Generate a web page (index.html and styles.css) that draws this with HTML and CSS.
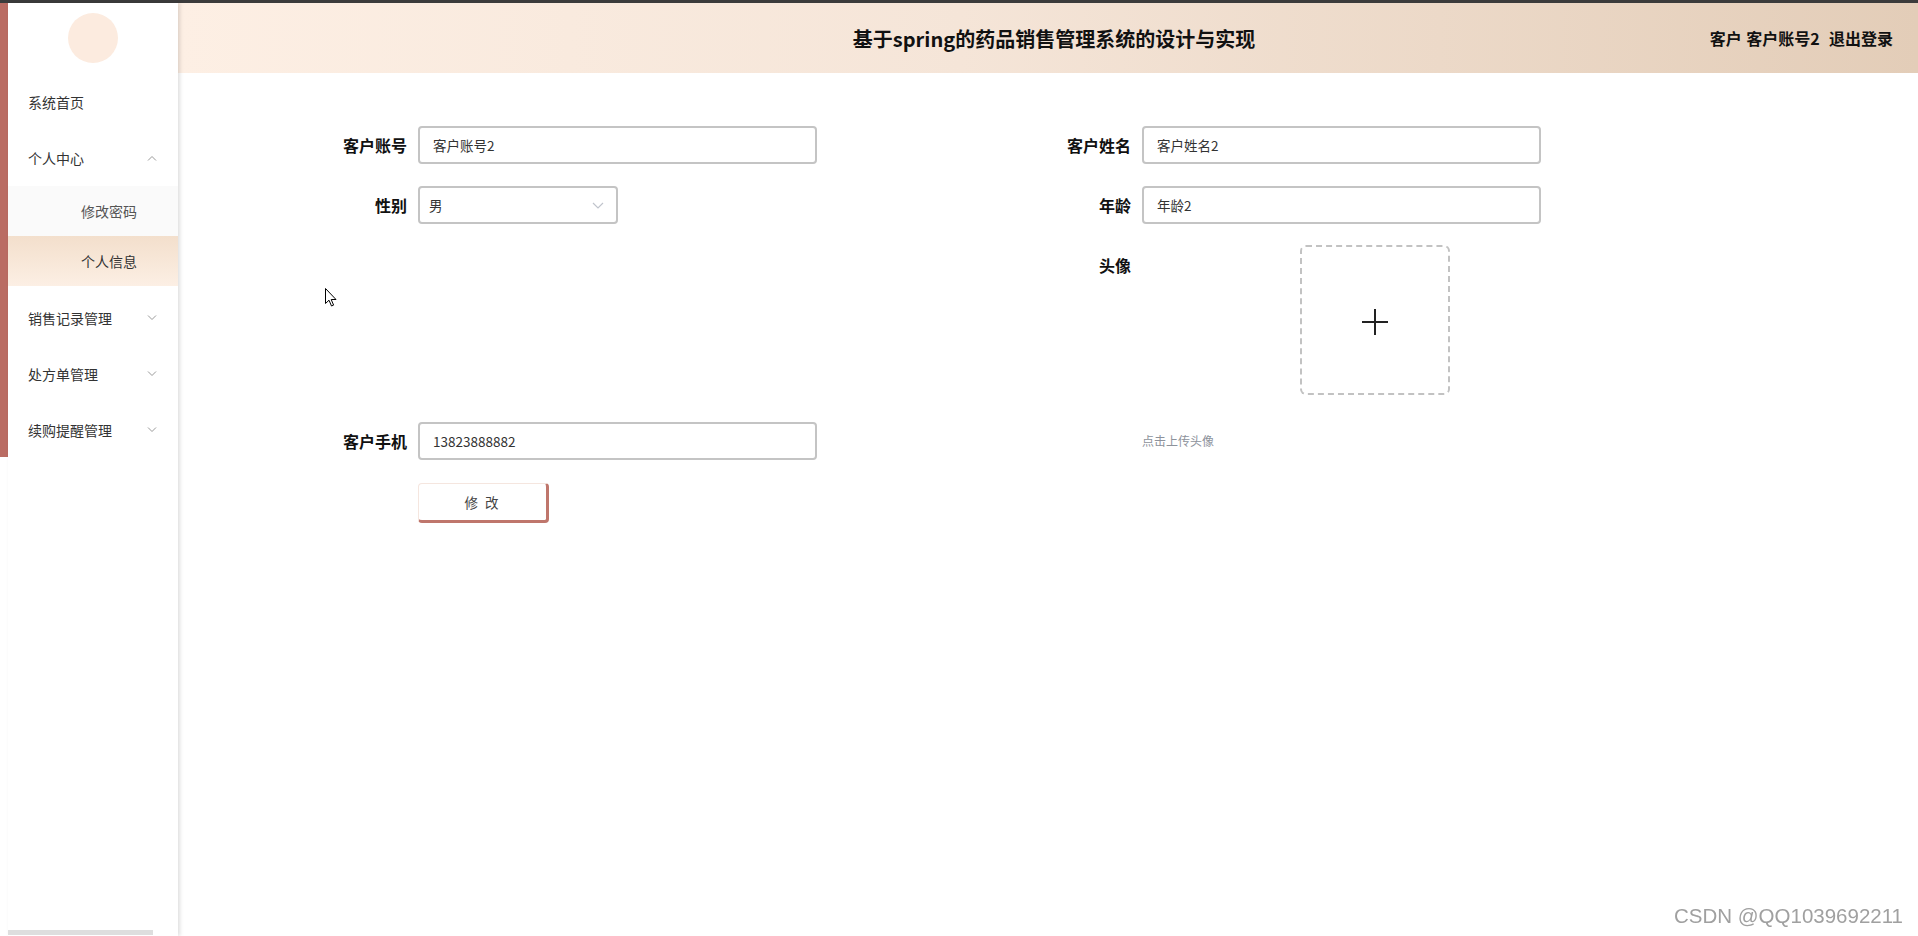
FILE: index.html
```html
<!DOCTYPE html>
<html lang="zh-CN">
<head>
<meta charset="utf-8">
<title>个人信息</title>
<link rel="stylesheet" href="styles.css">
</head>
<body>
<div class="topbar"></div>
<div class="layout">
  <aside class="sidebar">
    <div class="strip"></div>
    <nav class="panel">
      <div class="avatar"></div>
      <ul class="menu">
        <li class="item">系统首页</li>
        <li class="item">个人中心
          <svg class="chev" viewBox="0 0 10 6" width="10" height="6"><path d="M1 5.5 L5 1.5 L9 5.5" fill="none" stroke="#999" stroke-width="1"/></svg>
        </li>
        <li class="sub">
          <div class="sub-item">修改密码</div>
          <div class="sub-item active">个人信息</div>
        </li>
        <li class="item">销售记录管理
          <svg class="chev" viewBox="0 0 10 6" width="10" height="6"><path d="M1 0.5 L5 4.5 L9 0.5" fill="none" stroke="#999" stroke-width="1"/></svg>
        </li>
        <li class="item">处方单管理
          <svg class="chev" viewBox="0 0 10 6" width="10" height="6"><path d="M1 0.5 L5 4.5 L9 0.5" fill="none" stroke="#999" stroke-width="1"/></svg>
        </li>
        <li class="item">续购提醒管理
          <svg class="chev" viewBox="0 0 10 6" width="10" height="6"><path d="M1 0.5 L5 4.5 L9 0.5" fill="none" stroke="#999" stroke-width="1"/></svg>
        </li>
      </ul>
      <div class="scrollbar"></div>
    </nav>
  </aside>
  <main class="main">
    <header class="header">
      <div></div>
      <h1 class="title">基于spring的药品销售管理系统的设计与实现</h1>
      <div class="user">客户 客户账号2&nbsp;&nbsp;退出登录</div>
    </header>
    <form class="form">
      <div class="field">
        <label class="label">客户账号</label>
        <input class="input" type="text" value="客户账号2">
      </div>
      <div class="field">
        <label class="label">客户姓名</label>
        <input class="input" type="text" value="客户姓名2">
      </div>
      <div class="field">
        <label class="label">性别</label>
        <div class="select">
          <span>男</span>
          <svg viewBox="0 0 12 7" width="12" height="7"><path d="M1 1 L6 6 L11 1" fill="none" stroke="#c0c4cc" stroke-width="1.2"/></svg>
        </div>
      </div>
      <div class="field">
        <label class="label">年龄</label>
        <input class="input" type="text" value="年龄2">
      </div>
      <div class="field"></div>
      <div class="field upload-field">
        <label class="label">头像</label>
        <div class="upload">
          <svg viewBox="0 0 28 28" width="28" height="28"><path d="M14 1 V27 M1 14 H27" stroke="#222" stroke-width="2"/></svg>
        </div>
      </div>
      <div class="field">
        <label class="label">客户手机</label>
        <input class="input" type="text" value="13823888882">
      </div>
      <div class="field">
        <div class="hint">点击上传头像</div>
      </div>
      <div class="field">
        <button class="btn" type="button">修 改</button>
      </div>
    </form>
    <svg class="cursor" viewBox="0 0 12 19" width="12" height="19"><path d="M0.5 0.5 L0.5 15.5 L4 12.2 L6.5 18 L8.6 17.1 L6.2 11.5 L11 11.5 Z" fill="#fff" stroke="#000" stroke-width="1"/></svg>
  </main>
</div>
<div class="watermark">CSDN @QQ1039692211</div>
</body>
</html>
```
FILE: styles.css
```css
* { box-sizing: border-box; }
html, body {
  margin: 0;
  padding: 0;
  height: 100%;
  overflow: hidden;
  background: #fff;
  font-family: "Noto Sans CJK SC", "Liberation Sans", sans-serif;
  color: #333;
}
.topbar {
  height: 3px;
  background: #3b3b3b;
}
.layout {
  display: flex;
  height: calc(100vh - 3px);
}
.sidebar {
  display: flex;
  align-items: flex-start;
  width: 178px;
  flex: 0 0 178px;
  height: 100%;
  position: relative;
  z-index: 2;
}
.strip {
  width: 8px;
  height: 454px;
  background: #ba6c63;
}
.panel {
  width: 170px;
  height: 100%;
  background: #fff;
  box-shadow: 2px 0 4px rgba(0, 0, 0, 0.13);
  display: flex;
  flex-direction: column;
}
.avatar {
  width: 50px;
  height: 50px;
  border-radius: 50%;
  background: #fcebdf;
  margin: 10px auto 11px;
}
.menu {
  list-style: none;
  margin: 0;
  padding: 0;
}
.item {
  height: 56px;
  display: flex;
  align-items: center;
  justify-content: space-between;
  padding: 0 21px 0 20px;
  font-size: 14px;
  color: #333;
}
.chev { display: block; }
.sub {
  padding-bottom: 4px;
}
.sub-item {
  height: 50px;
  display: flex;
  align-items: center;
  padding-left: 73px;
  font-size: 14px;
  color: #555;
  background: #fafafa;
}
.sub-item.active {
  background: linear-gradient(180deg, #f3dfcc, #fcefe4);
  color: #333;
}
.scrollbar {
  margin-top: auto;
  margin-bottom: 1px;
  height: 5px;
  width: 145px;
  background: #dedede;
}
.main {
  flex: 1;
  position: relative;
}
.header {
  height: 70px;
  display: grid;
  grid-template-columns: 1fr auto 1fr;
  align-items: center;
  padding: 0 25px 0 37px;
  background: linear-gradient(90deg, #fdefe4 0%, #f5e5d8 45%, #e3cdb8 100%);
}
.title {
  margin: 0;
  font-size: 20px;
  font-weight: 700;
  color: #111;
  white-space: nowrap;
}
.user {
  justify-self: end;
  font-size: 16px;
  font-weight: 700;
  color: #111;
  word-spacing: 1px;
}
.form {
  display: grid;
  grid-template-columns: 724px 724px;
  row-gap: 22px;
  padding: 53px 0 0 118px;
}
.field {
  display: flex;
  align-items: flex-start;
  min-height: 38px;
}
.label {
  width: 122px;
  padding-right: 11px;
  text-align: right;
  line-height: 38px;
  font-size: 16px;
  font-weight: 700;
  color: #111;
}
.input {
  width: 399px;
  height: 38px;
  border: 2px solid #c4c4c4;
  border-radius: 4px;
  padding: 0 13px;
  font-family: "Noto Sans CJK SC", "Liberation Sans", sans-serif;
  font-size: 13.5px;
  color: #333;
  background: #fff;
  outline: none;
}
.select {
  width: 200px;
  height: 38px;
  border: 2px solid #c4c4c4;
  border-radius: 4px;
  padding: 0 12px 0 9px;
  display: flex;
  align-items: center;
  justify-content: space-between;
  font-size: 13.5px;
  color: #333;
}
.upload-field {
  min-height: 154px;
}
.upload {
  margin-left: 158px;
  margin-top: -1px;
  width: 150px;
  height: 150px;
  border: 2px dashed #c2c2c2;
  border-radius: 6px;
  padding-top: 4px;
  display: flex;
  align-items: center;
  justify-content: center;
}
.hint {
  padding-left: 122px;
  line-height: 38px;
  font-size: 12px;
  color: #8d929b;
}
.btn {
  margin-left: 122px;
  margin-top: 1px;
  width: 131px;
  height: 40px;
  background: #fff;
  border: 1px solid #f5e6df;
  border-right: 3px solid #bf766c;
  border-bottom: 3px solid #bf766c;
  border-radius: 4px;
  font-family: "Noto Sans CJK SC", "Liberation Sans", sans-serif;
  font-size: 13.5px;
  color: #444;
  letter-spacing: 2px;
  padding: 0;
}
.cursor {
  position: absolute;
  left: 147px;
  top: 285px;
}
.watermark {
  position: fixed;
  right: 15px;
  bottom: 8px;
  font-family: "Liberation Sans", sans-serif;
  font-size: 20.5px;
  color: #a0a0a0;
  text-shadow: 0 0 2px #fff;
}
```
